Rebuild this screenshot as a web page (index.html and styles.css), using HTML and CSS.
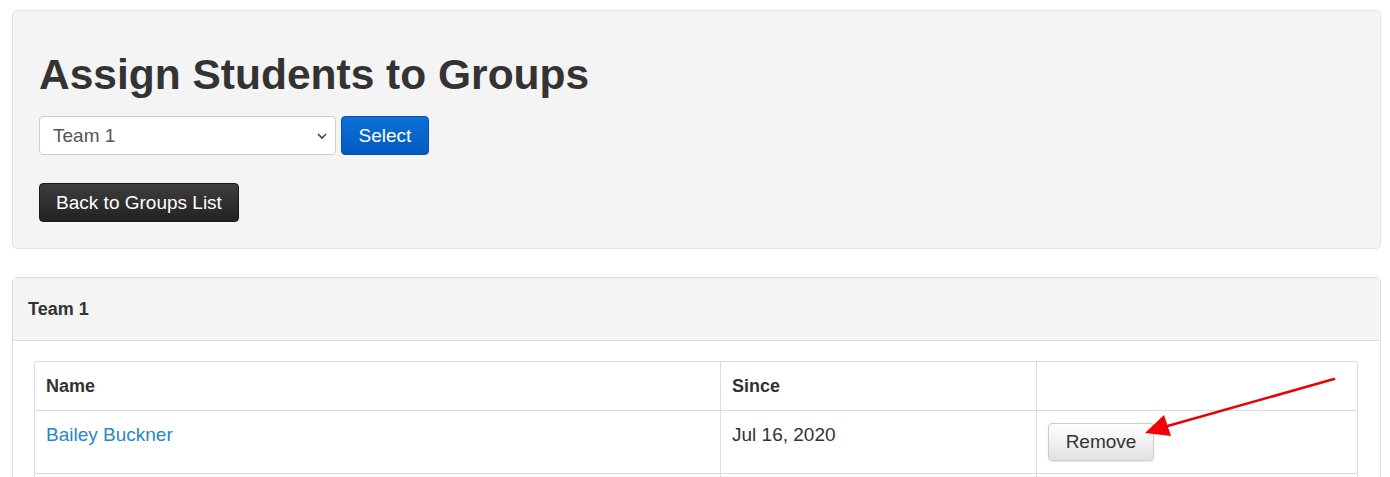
FILE: index.html
```html
<!DOCTYPE html>
<html lang="en">
<head>
  <meta charset="UTF-8" />
  <meta name="viewport" content="width=device-width, initial-scale=1.0"/>
  <title>Assign Students to Groups</title>
  <link rel="stylesheet" href="styles.css">
</head>
<body>
  <div class="page">
    <div class="well">
      <h1>Assign Students to Groups</h1>
      <form class="group-form">
        <div class="select-wrap">
          <select class="group-select">
            <option>Team 1</option>
            <option>Team 2</option>
          </select>
          <svg class="caret" width="12" height="8" viewBox="0 0 12 8"><path d="M2 2l4 4 4-4" fill="none" stroke="#444" stroke-width="1.6"/></svg>
        </div>
        <button type="button" class="btn btn-primary">Select</button>
      </form>
      <button type="button" class="btn btn-dark">Back to Groups List</button>
    </div>

    <div class="panel">
      <div class="panel-heading">Team 1</div>
      <div class="panel-body">
        <table class="members">
          <thead>
            <tr>
              <th class="col-name">Name</th>
              <th class="col-since">Since</th>
              <th></th>
            </tr>
          </thead>
          <tbody>
            <tr>
              <td><a href="#">Bailey Buckner</a></td>
              <td>Jul 16, 2020</td>
              <td><button type="button" class="btn btn-default">Remove</button></td>
            </tr>
            <tr>
              <td>&nbsp;</td>
              <td></td>
              <td></td>
            </tr>
          </tbody>
        </table>
      </div>
      <svg class="arrow" width="200" height="70" viewBox="0 0 200 70">
        <line x1="196" y1="4" x2="26" y2="52" stroke="#e8000b" stroke-width="2.6" stroke-linecap="round"/>
        <polygon points="7,58 26,40 33,61" fill="#f40009"/>
      </svg>
    </div>
  </div>
</body>
</html>
```

FILE: styles.css
```css
body {
  margin: 0;
  font-family: 'Liberation Sans', Arial, sans-serif;
  font-size: 19px;
  color: #333;
  background: #fff;
}
.page {
  padding: 10px 9px 0 12px;
}
.well {
  background: #f4f4f4;
  border: 1px solid #e3e3e3;
  border-radius: 5px;
  padding: 41px 26px 26px;
}
h1 {
  margin: 0 0 18px;
  font-size: 42.5px;
  line-height: 46px;
  font-weight: bold;
}
.group-form {
  display: flex;
  gap: 5px;
  margin-bottom: 28px;
}
.select-wrap {
  position: relative;
  width: 297px;
}
.group-select {
  width: 100%;
  height: 39px;
  padding: 0 30px 0 13px;
  font-family: inherit;
  font-size: 19px;
  color: #555;
  background: #fff;
  border: 1px solid #ccc;
  border-radius: 4px;
  appearance: none;
}
.caret {
  position: absolute;
  right: 8px;
  top: 16px;
  pointer-events: none;
}
.btn {
  height: 39px;
  padding: 0 14px;
  font-family: inherit;
  font-size: 19px;
  border-radius: 4px;
  cursor: pointer;
}
.btn-primary {
  color: #fff;
  background: linear-gradient(#0b72d8, #0459bf);
  border: 1px solid #0650b0;
  width: 88px;
}
.btn-dark {
  color: #fff;
  background: linear-gradient(#3e3e3e, #222);
  border: 1px solid #1a1a1a;
  width: 200px;
  display: block;
}
.btn-default {
  color: #333;
  background: linear-gradient(#fff, #e2e2e2);
  border: 1px solid #ccc;
  width: 106px;
  height: 38px;
  box-shadow: 0 1px 2px rgba(0,0,0,0.1);
}
.panel {
  position: relative;
  margin-top: 28px;
  border: 1px solid #ddd;
  border-radius: 5px 5px 0 0;
  border-bottom: none;
}
.panel-heading {
  background: #f4f4f4;
  border-bottom: 1px solid #ddd;
  height: 62px;
  line-height: 62px;
  padding: 0 15px;
  font-size: 18px;
  font-weight: bold;
}
.panel-body {
  padding: 20px 22px 0 21px;
}
.members {
  width: 100%;
  border-collapse: separate;
  border-spacing: 0;
  border: 1px solid #ddd;
  border-bottom: none;
  border-radius: 4px 4px 0 0;
}
.members th,
.members td {
  text-align: left;
  vertical-align: top;
  padding: 12px 11px;
  border-left: 1px solid #ddd;
  border-top: 1px solid #ddd;
  line-height: 24px;
}
.members th {
  font-size: 18px;
}
.members th:first-child,
.members td:first-child {
  border-left: none;
}
.members thead th {
  border-top: none;
  height: 24px;
}
.members tbody td {
  height: 37px;
}
.col-name { width: 663px; }
.col-since { width: 293px; }
.members a {
  color: #2a86c4;
  text-decoration: none;
}
.arrow {
  position: absolute;
  left: 1125px;
  top: 97px;
}
```
